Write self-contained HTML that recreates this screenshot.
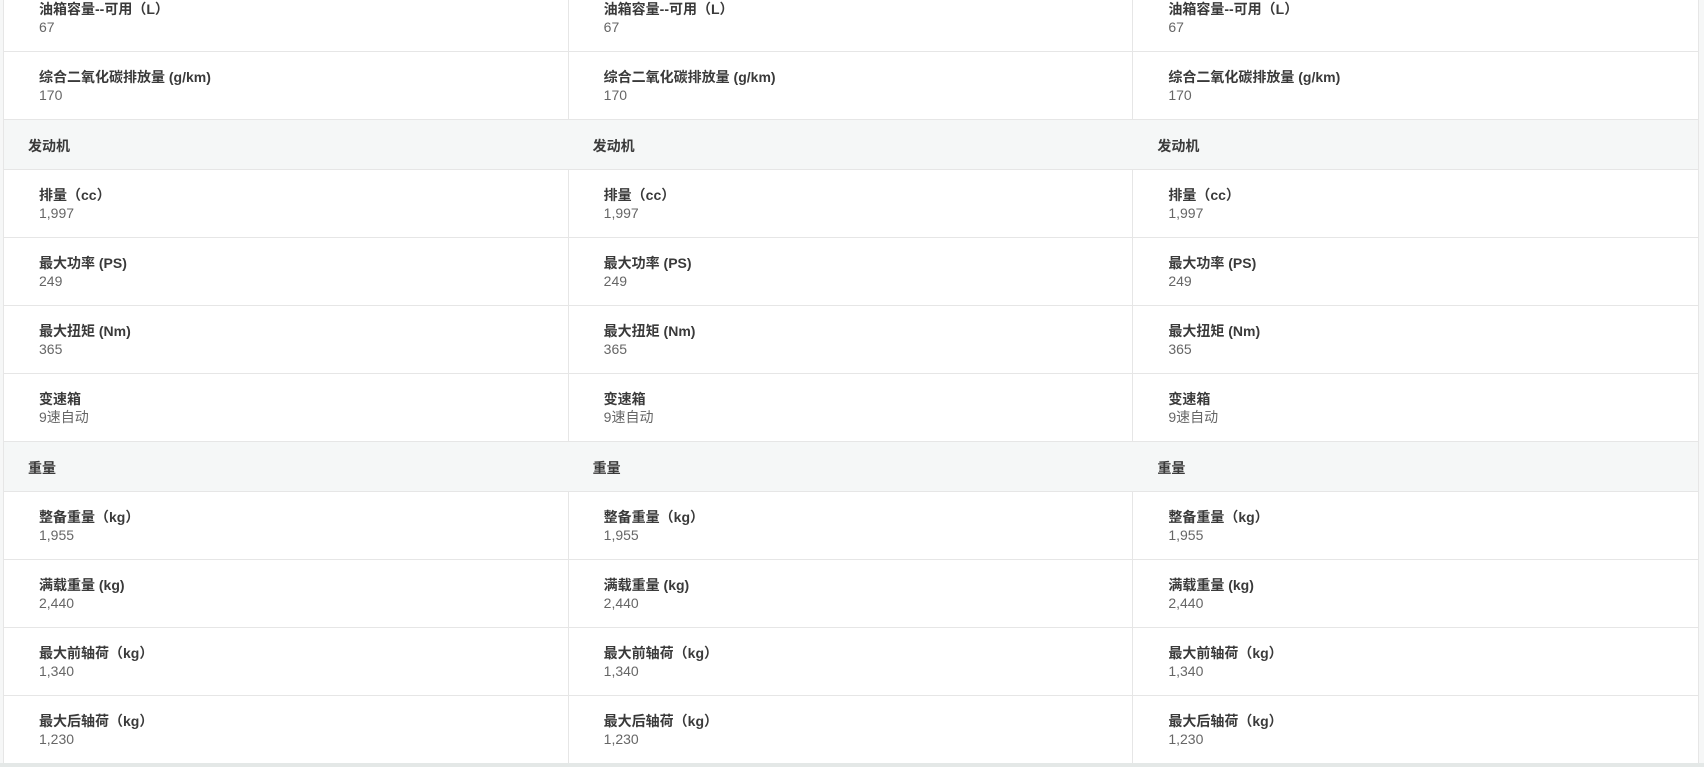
<!DOCTYPE html>
<html><head><meta charset="utf-8"><style>
*{margin:0;padding:0;box-sizing:border-box}
body{width:1704px;height:767px;overflow:hidden;background:#f6f7f7;font-family:"Liberation Sans","Noto Sans CJK SC",sans-serif;position:relative}
.wrap{position:absolute;left:3px;top:-16px;width:1696px;background:#fff;border-left:1px solid #e6e6e6;border-right:1px solid #e6e6e6}
.row{display:flex;height:68px;border-bottom:1px solid #e6e6e6}
.row .c{width:565px;border-right:1px solid #e6e6e6;padding:16px 0 0 35px;font-size:14px;line-height:18px}
.row .c:last-child{border-right:none}
.t{color:#3a3a3a;font-weight:bold}
.v{color:#666}
.h{display:flex;height:50px;background:#f5f7f7;border-bottom:1px solid #e6e6e6}
.h .c{width:565px;padding:16px 0 0 24px;font-size:14px;font-weight:bold;color:#3a3a3a}
.bot{position:absolute;left:0;top:763px;width:1704px;height:4px;background:#e4e8e7}
</style></head><body>
<div class="wrap">
<div class="row"><div class="c"><div class="t">油箱容量--可用（L）</div><div class="v">67</div></div><div class="c"><div class="t">油箱容量--可用（L）</div><div class="v">67</div></div><div class="c"><div class="t">油箱容量--可用（L）</div><div class="v">67</div></div></div>
<div class="row"><div class="c"><div class="t">综合二氧化碳排放量 (g/km)</div><div class="v">170</div></div><div class="c"><div class="t">综合二氧化碳排放量 (g/km)</div><div class="v">170</div></div><div class="c"><div class="t">综合二氧化碳排放量 (g/km)</div><div class="v">170</div></div></div>
<div class="h"><div class="c">发动机</div><div class="c">发动机</div><div class="c">发动机</div></div>
<div class="row"><div class="c"><div class="t">排量（cc）</div><div class="v">1,997</div></div><div class="c"><div class="t">排量（cc）</div><div class="v">1,997</div></div><div class="c"><div class="t">排量（cc）</div><div class="v">1,997</div></div></div>
<div class="row"><div class="c"><div class="t">最大功率 (PS)</div><div class="v">249</div></div><div class="c"><div class="t">最大功率 (PS)</div><div class="v">249</div></div><div class="c"><div class="t">最大功率 (PS)</div><div class="v">249</div></div></div>
<div class="row"><div class="c"><div class="t">最大扭矩 (Nm)</div><div class="v">365</div></div><div class="c"><div class="t">最大扭矩 (Nm)</div><div class="v">365</div></div><div class="c"><div class="t">最大扭矩 (Nm)</div><div class="v">365</div></div></div>
<div class="row"><div class="c"><div class="t">变速箱</div><div class="v">9速自动</div></div><div class="c"><div class="t">变速箱</div><div class="v">9速自动</div></div><div class="c"><div class="t">变速箱</div><div class="v">9速自动</div></div></div>
<div class="h"><div class="c">重量</div><div class="c">重量</div><div class="c">重量</div></div>
<div class="row"><div class="c"><div class="t">整备重量（kg）</div><div class="v">1,955</div></div><div class="c"><div class="t">整备重量（kg）</div><div class="v">1,955</div></div><div class="c"><div class="t">整备重量（kg）</div><div class="v">1,955</div></div></div>
<div class="row"><div class="c"><div class="t">满载重量 (kg)</div><div class="v">2,440</div></div><div class="c"><div class="t">满载重量 (kg)</div><div class="v">2,440</div></div><div class="c"><div class="t">满载重量 (kg)</div><div class="v">2,440</div></div></div>
<div class="row"><div class="c"><div class="t">最大前轴荷（kg）</div><div class="v">1,340</div></div><div class="c"><div class="t">最大前轴荷（kg）</div><div class="v">1,340</div></div><div class="c"><div class="t">最大前轴荷（kg）</div><div class="v">1,340</div></div></div>
<div class="row"><div class="c"><div class="t">最大后轴荷（kg）</div><div class="v">1,230</div></div><div class="c"><div class="t">最大后轴荷（kg）</div><div class="v">1,230</div></div><div class="c"><div class="t">最大后轴荷（kg）</div><div class="v">1,230</div></div></div>
</div>
<div class="bot"></div>
</body></html>
